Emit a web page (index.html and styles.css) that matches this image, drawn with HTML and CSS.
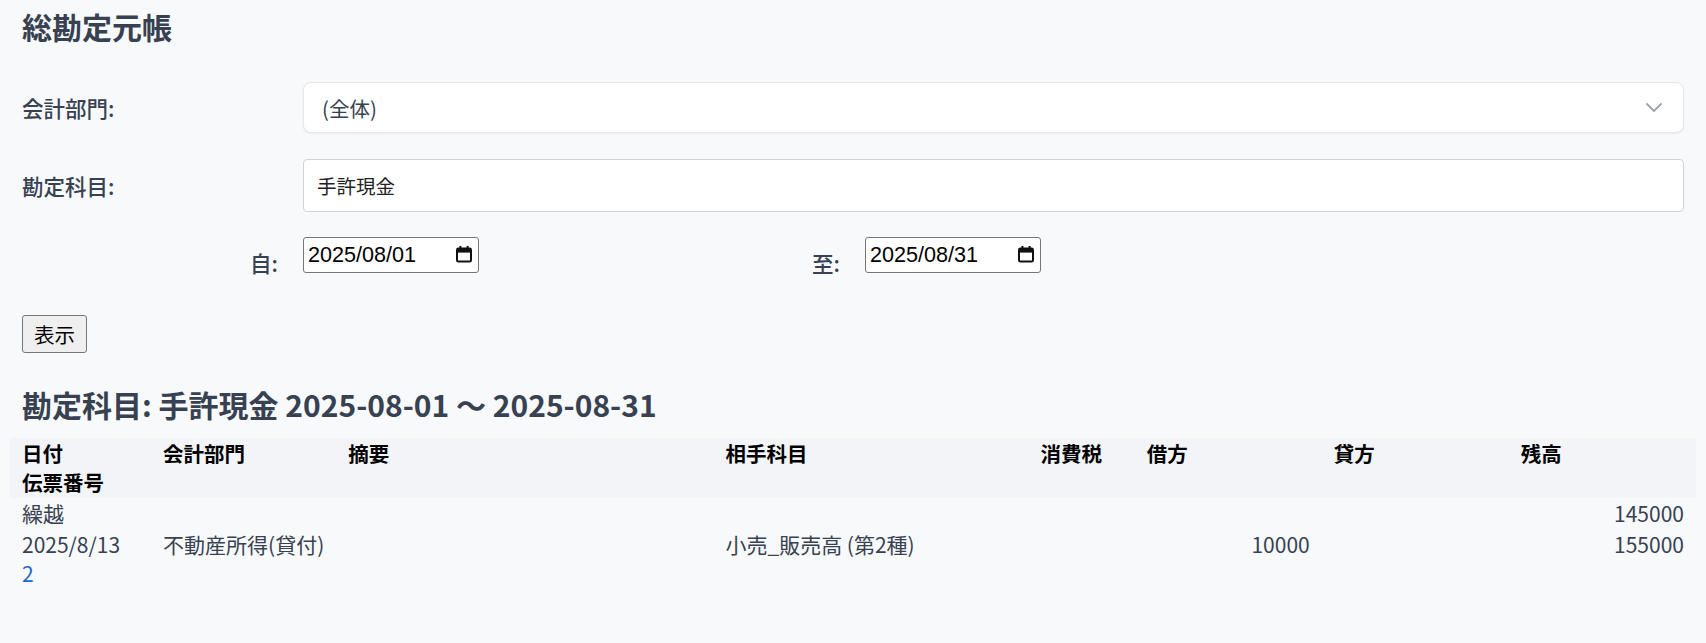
FILE: index.html
```html
<!DOCTYPE html>
<html lang="ja">
<head>
    <meta charset="UTF-8">
    <meta name="viewport" content="width=device-width, initial-scale=1.0">
    <title>総勘定元帳</title>
    <link rel="stylesheet" href="styles.css">
</head>
<body>
    <h1 class="page-title">総勘定元帳</h1>

    <form class="ledger-form" onsubmit="return false;">
        <div class="form-row">
            <label for="dept">会計部門:</label>
            <div class="select-wrap">
                <select id="dept" class="select-box">
                    <option>(全体)</option>
                </select>
                <svg class="chevron" width="16" height="9" viewBox="0 0 16 9">
                    <polyline points="1,1 8,8 15,1" fill="none" stroke="#9ca3af" stroke-width="1.8" stroke-linecap="round" stroke-linejoin="round"/>
                </svg>
            </div>
        </div>

        <div class="form-row">
            <label for="account">勘定科目:</label>
            <input type="text" id="account" class="text-box" value="手許現金">
        </div>

        <div class="date-row">
            <div class="date-field">
                <label for="from">自:</label>
                <div class="date-box">
                    <input type="text" id="from" value="2025/08/01">
                    <svg class="cal-icon" width="18" height="18" viewBox="0 0 18 18">
                        <rect x="2" y="3.6" width="14" height="13" rx="1.4" fill="none" stroke="#111" stroke-width="2"/>
                        <rect x="2" y="3.6" width="14" height="4" fill="#111"/>
                        <rect x="4.4" y="1" width="2" height="3.2" fill="#111"/>
                        <rect x="11.6" y="1" width="2" height="3.2" fill="#111"/>
                    </svg>
                </div>
            </div>
            <div class="date-field">
                <label for="to">至:</label>
                <div class="date-box">
                    <input type="text" id="to" value="2025/08/31">
                    <svg class="cal-icon" width="18" height="18" viewBox="0 0 18 18">
                        <rect x="2" y="3.6" width="14" height="13" rx="1.4" fill="none" stroke="#111" stroke-width="2"/>
                        <rect x="2" y="3.6" width="14" height="4" fill="#111"/>
                        <rect x="4.4" y="1" width="2" height="3.2" fill="#111"/>
                        <rect x="11.6" y="1" width="2" height="3.2" fill="#111"/>
                    </svg>
                </div>
            </div>
        </div>

        <button type="submit" class="show-btn">表示</button>
    </form>

    <h2 class="result-title">勘定科目: 手許現金 2025-08-01 〜 2025-08-31</h2>

    <table class="ledger">
        <colgroup>
            <col class="c-date">
            <col class="c-dept">
            <col class="c-memo">
            <col class="c-other">
            <col class="c-tax">
            <col class="c-amount">
            <col class="c-amount">
            <col class="c-amount">
        </colgroup>
        <thead>
            <tr>
                <th>日付<br>伝票番号</th>
                <th>会計部門</th>
                <th>摘要</th>
                <th>相手科目</th>
                <th>消費税</th>
                <th>借方</th>
                <th>貸方</th>
                <th>残高</th>
            </tr>
        </thead>
        <tbody>
            <tr>
                <td>繰越</td>
                <td></td>
                <td></td>
                <td></td>
                <td></td>
                <td></td>
                <td></td>
                <td class="num">145000</td>
            </tr>
            <tr>
                <td>2025/8/13<br><a href="#" class="slip-link">2</a></td>
                <td>不動産所得(貸付)</td>
                <td></td>
                <td>小売_販売高 (第2種)</td>
                <td></td>
                <td class="num">10000</td>
                <td></td>
                <td class="num">155000</td>
            </tr>
        </tbody>
    </table>
</body>
</html>
```

FILE: styles.css
```css
body {
    margin: 0;
    padding: 0 22px 40px;
    background-color: #f8f9fb;
    font-family: "Noto Sans CJK JP", "Noto Sans", sans-serif;
    color: #374151;
}

.page-title {
    margin: 8px 0 0;
    font-size: 30px;
    line-height: 36px;
    font-weight: 700;
    color: #374151;
}

.ledger-form {
    margin-top: 38px;
}

.form-row {
    display: flex;
    align-items: center;
    margin-bottom: 26px;
}

.form-row label {
    width: 281px;
    flex-shrink: 0;
    font-size: 21.5px;
    font-weight: 500;
}

.select-wrap {
    position: relative;
    flex: 1;
}

.select-box {
    appearance: none;
    -webkit-appearance: none;
    width: 100%;
    height: 51px;
    padding: 0 40px 0 18px;
    background-color: #fff;
    border: 1px solid #e5e7eb;
    border-radius: 8px;
    box-shadow: 0 1px 2px rgba(0, 0, 0, 0.06);
    font-family: inherit;
    font-size: 20.5px;
    color: #374151;
}

.chevron {
    position: absolute;
    right: 22px;
    top: 21px;
    pointer-events: none;
}

.text-box {
    flex: 1;
    height: 53px;
    box-sizing: border-box;
    padding: 0 13px;
    background-color: #fff;
    border: 1px solid #cfd2d6;
    border-radius: 4px;
    font-family: inherit;
    font-size: 19.5px;
    color: #222;
}

.date-row {
    display: flex;
    margin-top: -1px;
}

.date-field {
    display: flex;
    align-items: flex-end;
    width: 562px;
}

.date-field label {
    width: 256px;
    margin-right: 25px;
    text-align: right;
    font-size: 21.5px;
    font-weight: 500;
    line-height: 20px;
}

.date-box {
    position: relative;
    width: 176px;
}

.date-box input {
    width: 100%;
    height: 36px;
    box-sizing: border-box;
    padding: 1px 4px;
    font-family: "Liberation Sans", Arial, sans-serif;
    font-size: 21.6px;
    color: #000;
    background-color: #fff;
    border: 1px solid #767676;
    border-radius: 3px;
}

.cal-icon {
    position: absolute;
    right: 6px;
    top: 8px;
    pointer-events: none;
}

.show-btn {
    display: block;
    margin-top: 42px;
    padding: 2px 11px;
    line-height: 32px;
    font-family: "Noto Sans CJK JP", sans-serif;
    font-size: 20.5px;
    color: #000;
    background-color: #efefef;
    border: 1px solid #767676;
    border-radius: 3px;
}

.result-title {
    margin: 33px 0 0;
    font-size: 30px;
    line-height: 36px;
    font-weight: 700;
    color: #374151;
}

.ledger {
    width: calc(100% + 24px);
    margin: 16px -12px 0;
    table-layout: fixed;
    border-collapse: collapse;
    font-size: 21px;
    line-height: 29px;
}

.c-date { width: 141px; }
.c-dept { width: 185px; }
.c-memo { width: 377px; }
.c-other { width: 315px; }
.c-tax { width: 106px; }
.c-amount { width: 187px; }

.ledger thead tr {
    background-color: #f2f4f7;
}

.ledger th {
    padding: 1px 12px;
    text-align: left;
    vertical-align: top;
    font-size: 20.5px;
    font-weight: 700;
    color: #000;
}

.ledger td {
    padding: 1px 12px;
    vertical-align: top;
    white-space: nowrap;
    color: #374151;
}

.ledger td.num {
    text-align: right;
}

.slip-link {
    color: #1967d2;
    text-decoration: none;
}
```
